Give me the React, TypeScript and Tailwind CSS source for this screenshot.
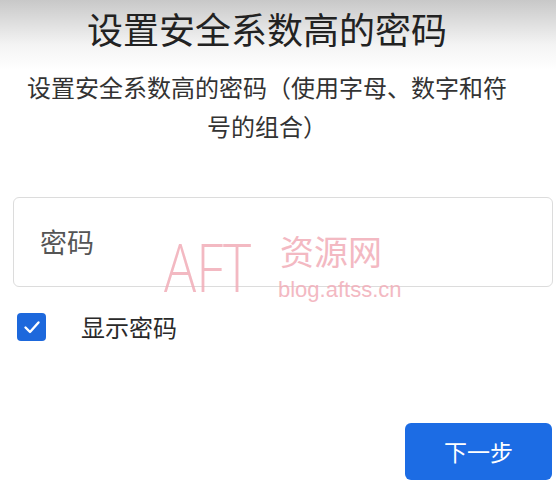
import React from "react";

export default function App() {
  return (
    <div
      className="relative w-[556px] h-[485px] overflow-hidden bg-[linear-gradient(to_bottom,#c8c8c8_0px,#f4f4f4_45px,#ffffff_70px)]"
      style={{ fontFamily: '"Noto Sans CJK SC", "Noto Sans", sans-serif' }}
    >
      <div className="flex flex-col items-center pt-[5px] pr-[22px]">
        <h1 className="text-[36px] leading-[46px] font-normal text-[#222222]">
          设置安全系数高的密码
        </h1>
        <p className="mt-[16px] w-[490px] text-center text-[24px] leading-[39px] text-[#333333]">
          设置安全系数高的密码（使用字母、数字和符号的组合）
        </p>
      </div>

      <div className="mt-[52px] ml-[13px] w-[540px] h-[90px] rounded-[6px] border border-[#dcdcdc] flex items-center pl-[26px] text-[27px] text-[#555555]">
        密码
      </div>

      <div className="mt-[25px] ml-[17px] flex items-center">
        <div className="w-[29px] h-[28px] rounded-[4px] bg-[#1d68dc] flex items-center justify-center">
          <svg width="20" height="20" viewBox="0 0 20 20" fill="none">
            <path
              d="M3.5 10.5 L8 15 L16.5 5.5"
              stroke="#ffffff"
              strokeWidth="2.4"
              strokeLinecap="round"
              strokeLinejoin="round"
            />
          </svg>
        </div>
        <span className="ml-[35px] text-[24px] leading-[30px] text-[#2a2a2a]">显示密码</span>
      </div>

      <div className="mt-[81px] flex justify-end pr-[4px]">
        <button className="w-[147px] h-[57px] rounded-[6px] bg-[#1c6ce4] text-white text-[23px] flex items-center justify-center">
          下一步
        </button>
      </div>

      {/* watermark */}
      <div className="absolute left-[164px] top-[226px] pointer-events-none text-[#f2adb8] opacity-85">
        <span
          className="inline-block origin-left scale-x-[0.8] text-[67px] leading-[80px] font-light"
          style={{ fontFamily: '"Open Sans", sans-serif' }}
        >
          AFT
        </span>
      </div>
      <div className="absolute left-[280px] top-[228px] pointer-events-none text-[#f2adb8] opacity-85 text-[34px] leading-[46px]">
        资源网
      </div>
      <div
        className="absolute left-[278px] top-[277px] pointer-events-none text-[#f2adb8] opacity-85 text-[22px] leading-[26px]"
        style={{ fontFamily: '"Liberation Sans", sans-serif' }}
      >
        blog.aftss.cn
      </div>
    </div>
  );
}
